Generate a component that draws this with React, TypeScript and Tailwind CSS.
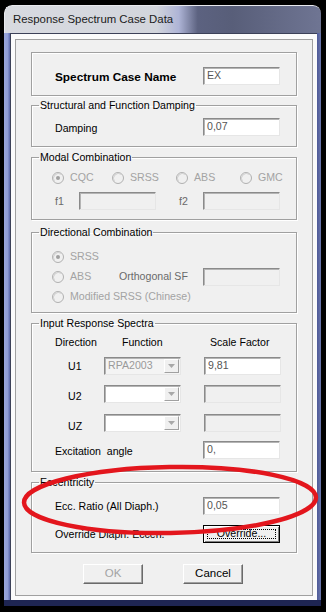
import React from "react";

const Field = ({ value = "", disabled = false }: { value?: string; disabled?: boolean }) => (
  <div
    className={`h-[18px] w-[77px] shrink-0 border border-[#8a8a8a] border-r-[#e6e6e6] border-b-[#e6e6e6] shadow-[inset_1px_1px_0_#b4b4b4] pl-[3px] flex items-center text-[#555] ${
      disabled ? "bg-[#f0f0f0]" : "bg-white"
    }`}
  >
    {value}
  </div>
);

const Combo = ({ value = "", disabled = false }: { value?: string; disabled?: boolean }) => (
  <div
    className={`h-[18px] w-[77px] shrink-0 border border-[#8a8a8a] border-r-[#e6e6e6] border-b-[#e6e6e6] shadow-[inset_1px_1px_0_#b4b4b4] flex items-center justify-between pl-[3px] pr-[1px] ${
      disabled ? "bg-[#f4f4f4] text-[#9a9a9a]" : "bg-white"
    }`}
  >
    <span>{value}</span>
    <div className="h-[14px] w-[15px] bg-[#f0f0f0] border border-white border-r-[#a0a0a0] border-b-[#a0a0a0] flex items-center justify-center">
      <svg width="7" height="4" viewBox="0 0 7 4">
        <path d="M0 0h7L3.5 4z" fill="#a8a8a8" />
      </svg>
    </div>
  </div>
);

const Radio = ({ checked = false }: { checked?: boolean }) => (
  <svg width="12" height="12" viewBox="0 0 12 12" className="shrink-0">
    <circle cx="6" cy="6" r="5.5" fill="#f0f0f0" stroke="#b0b0b0" />
    <path d="M2.5 9.5A5 5 0 0 1 9.5 2.5" stroke="#d0d0d0" fill="none" />
    {checked && <circle cx="6" cy="6" r="2" fill="#a0a0a0" />}
  </svg>
);

const Group = ({ title, h, mt, children }: { title: string; h: string; mt: string; children: React.ReactNode }) => (
  <fieldset
    className={`${h} ${mt} border border-[#a0a0a0] shadow-[inset_1px_1px_0_#fff,1px_1px_0_#fff]`}
  >
    <legend className="ml-[7px] px-[1px] leading-[14px] text-black">{title}</legend>
    {children}
  </fieldset>
);

export default function App() {
  const gray = "text-[#a3a3a3]";
  return (
    <div className="relative w-[326px] h-[612px] bg-black overflow-hidden font-['Liberation_Sans',Arial,sans-serif] text-[10.6px] text-black">
      <div className="ml-[4px] mt-[5px] w-[317px] h-[601px] flex flex-col rounded-t-[8px] overflow-hidden">
        {/* title bar */}
        <div className="h-[28px] shrink-0 bg-[linear-gradient(90deg,#d8dae0_0%,#d2d5dc_48%,#aeb4d6_55%,#5c6280_61%,#585e79_72%,#6f7593_100%)] pl-[8px] flex items-center border-t border-l border-[#e8e9ee] rounded-t-[8px]">
          <span className="text-[11.4px] text-[#1a1a1a] pt-[1px]">Response Spectrum Case Data</span>
        </div>
        <div className="flex flex-1">
          <div className="w-[6px] bg-[linear-gradient(90deg,#9aa7dc_0%,#8f9dd6_60%,#5b69ad_100%)]" />
          {/* client */}
          <div className="flex-1 bg-[#fbfbfb] border-l border-t border-[#3c4158] pl-[4px] pt-[5px] pr-[4px] pb-[4px] flex">
            <div className="flex-1 border border-[#a0a0a0] bg-[#f0f0f0] px-[15px] flex flex-col">
              {/* Spectrum Case Name */}
              <div className="mt-[12px] h-[44px] border border-[#a0a0a0] shadow-[inset_1px_1px_0_#fff,1px_1px_0_#fff] pt-[14px] pl-[23px]">
                <div className="flex items-center h-[18px]">
                  <span className="w-[148px] font-bold text-[11.8px] translate-y-[2px]">Spectrum Case Name</span>
                  <Field value="EX" />
                </div>
              </div>

              <Group title="Structural and Function Damping" h="h-[49px]" mt="mt-[2px]">
                <div className="flex items-center h-[18px] pl-[23px] mt-[6px]">
                  <span className="w-[148px] translate-y-[2px]">Damping</span>
                  <Field value="0,07" />
                </div>
              </Group>

              <Group title="Modal Combination" h="h-[70px]" mt="mt-[3px]">
                <div className={`flex items-center h-[16px] pl-[20px] mt-[6px] ${gray}`}>
                  <div className="w-[60px] flex items-center">
                    <Radio checked />
                    <span className="ml-[6px]">CQC</span>
                  </div>
                  <div className="w-[64px] flex items-center">
                    <Radio />
                    <span className="ml-[6px]">SRSS</span>
                  </div>
                  <div className="w-[64px] flex items-center">
                    <Radio />
                    <span className="ml-[6px]">ABS</span>
                  </div>
                  <div className="flex items-center">
                    <Radio />
                    <span className="ml-[6px]">GMC</span>
                  </div>
                </div>
                <div className="flex items-center h-[17px] pl-[23px] mt-[6px] text-[#6a6a6a]">
                  <span className="w-[24px] translate-y-[1px]">f1</span>
                  <Field disabled />
                  <span className="ml-[23px] w-[24px] translate-y-[1px]">f2</span>
                  <Field disabled />
                </div>
              </Group>

              <Group title="Directional Combination" h="h-[88px]" mt="mt-[5px]">
                <div className="pl-[20px] pt-[8px]">
                  <div className={`flex items-center h-[20px] ${gray}`}>
                    <Radio checked />
                    <span className="ml-[6px]">SRSS</span>
                  </div>
                  <div className="flex items-center h-[20px]">
                    <div className={`w-[67px] flex items-center ${gray}`}>
                      <Radio />
                      <span className="ml-[6px]">ABS</span>
                    </div>
                    <span className="w-[84px] text-[#6a6a6a]">Orthogonal SF</span>
                    <Field disabled />
                  </div>
                  <div className={`flex items-center h-[20px] ${gray}`}>
                    <Radio />
                    <span className="ml-[6px]">Modified SRSS (Chinese)</span>
                  </div>
                </div>
              </Group>

              <Group title="Input Response Spectra" h="h-[156px]" mt="mt-[3px]">
                <div className="flex items-center h-[16px] mt-[5px] pl-[23px]">
                  <span className="w-[67px]">Direction</span>
                  <span className="w-[88px]">Function</span>
                  <span>Scale Factor</span>
                </div>
                <div className="flex items-center h-[18px] pl-[36px] mt-[6px]">
                  <span className="w-[36px] translate-y-[1px]">U1</span>
                  <Combo value="RPA2003" disabled />
                  <div className="ml-[23px]">
                    <Field value="9,81" />
                  </div>
                </div>
                <div className="flex items-center h-[18px] pl-[36px] mt-[10px]">
                  <span className="w-[36px] translate-y-[3px]">U2</span>
                  <Combo />
                  <div className="ml-[23px]">
                    <Field disabled />
                  </div>
                </div>
                <div className="flex items-center h-[18px] pl-[36px] mt-[11px]">
                  <span className="w-[36px] translate-y-[4px]">UZ</span>
                  <Combo />
                  <div className="ml-[23px]">
                    <Field disabled />
                  </div>
                </div>
                <div className="flex items-center h-[18px] pl-[23px] mt-[9px]">
                  <span className="w-[148px] translate-y-[2px] whitespace-pre">Excitation  angle</span>
                  <Field value="0," />
                </div>
              </Group>

              <Group title="Eccentricity" h="h-[78px]" mt="mt-[3px]">
                <div className="flex items-center h-[18px] pl-[23px] mt-[8px]">
                  <span className="w-[148px] translate-y-[1px]">Ecc. Ratio (All Diaph.)</span>
                  <Field value="0,05" />
                </div>
                <div className="flex items-center h-[18px] pl-[23px] mt-[10px]">
                  <span className="w-[148px] translate-y-[1px]">Override Diaph. Eccen.</span>
                  <div className="h-[18px] w-[77px] border border-black bg-[#f0f0f0] shadow-[inset_1px_1px_0_#fff,inset_-1px_-1px_0_#808080] p-[3px]">
                    <div className="h-full w-full border border-dotted border-black flex items-center justify-center">
                      Override...
                    </div>
                  </div>
                </div>
              </Group>

              <div className="flex mt-[11px] pl-[52px]">
                <div className="h-[20px] w-[60px] border border-white border-r-[#6a6a6a] border-b-[#6a6a6a] shadow-[inset_-1px_-1px_0_#a0a0a0] flex items-center justify-center text-[#a3a3a3] text-[11.5px]">
                  OK
                </div>
                <div className="ml-[40px] h-[20px] w-[60px] border border-white border-r-[#6a6a6a] border-b-[#6a6a6a] shadow-[inset_-1px_-1px_0_#a0a0a0] flex items-center justify-center text-[11.5px]">
                  Cancel
                </div>
              </div>
            </div>
          </div>
          <div className="w-[4px] bg-[linear-gradient(90deg,#4e5a98_0%,#6c78ad_100%)]" />
        </div>
        <div className="h-[6px] shrink-0 bg-[#1e2552]" />
      </div>

      {/* red hand-drawn mark */}
      <svg className="absolute left-0 top-0 pointer-events-none" width="326" height="612">
        <ellipse
          cx="170"
          cy="500"
          rx="146"
          ry="33"
          fill="none"
          stroke="#e3161d"
          strokeWidth="4.5"
          transform="rotate(-1 170 500)"
        />
      </svg>
    </div>
  );
}
